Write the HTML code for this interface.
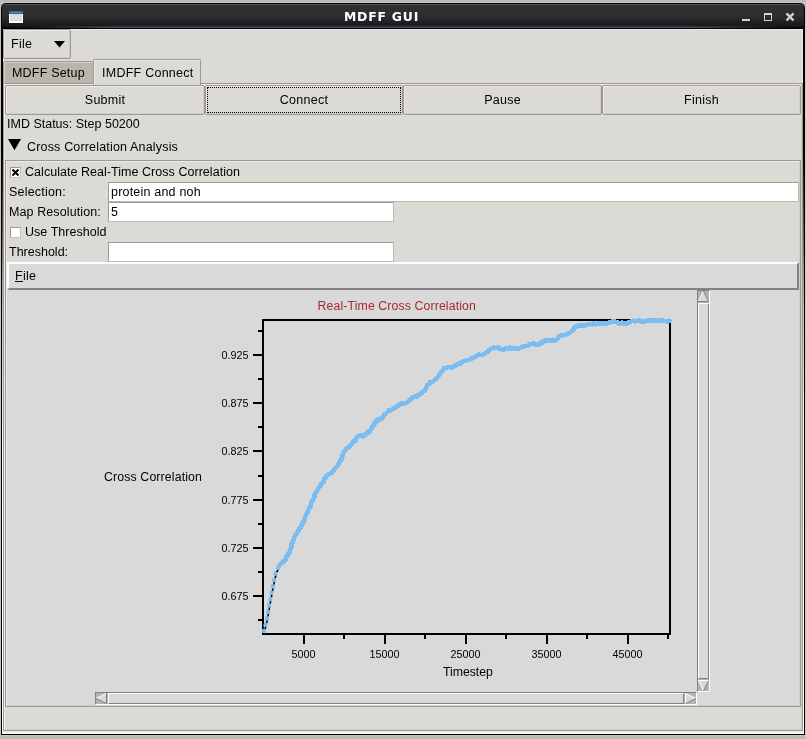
<!DOCTYPE html>
<html>
<head>
<meta charset="utf-8">
<title>MDFF GUI</title>
<style>
html,body{margin:0;padding:0;}
body{width:806px;height:739px;position:relative;overflow:hidden;background:#bebab8;
 font-family:"Liberation Sans",sans-serif;font-size:12.5px;letter-spacing:0.04px;color:#000;}
#root{position:absolute;left:0;top:0;width:806px;height:739px;will-change:transform;}
.a{position:absolute;}
.t{position:absolute;white-space:nowrap;line-height:14px;height:14px;}
.clam{position:absolute;box-sizing:border-box;border:1px solid #9e9a91;box-shadow:inset 1px 1px 0 #eeebe7,inset -1px -1px 0 #cfcdc8;}
.btn{border-radius:2px;background:#dcdad5;}
.btn span{position:absolute;left:0;right:0;top:7px;text-align:center;line-height:14px;letter-spacing:0.25px;}
.entry{position:absolute;box-sizing:border-box;border:1px solid;border-color:#9e9a91 #bdb9b0 #bdb9b0 #9e9a91;background:#fff;}
.entry span{position:absolute;left:2px;top:2px;line-height:14px;white-space:nowrap;}
.chk{position:absolute;box-sizing:border-box;width:11px;height:11px;border:1px solid;border-color:#9e9a91 #c5c2ba #c5c2ba #9e9a91;background:#fff;}
.tk{font-family:"Liberation Sans",sans-serif;font-size:10.8px;fill:#000;letter-spacing:0;}
.lb{font-family:"Liberation Sans",sans-serif;font-size:12.3px;fill:#000;letter-spacing:0.08px;}
</style>
</head>
<body>
<div id="root">
<!-- desktop edge highlights -->
<div class="a" style="left:0;top:2px;width:806px;height:1px;background:#cac7c5;"></div>
<div class="a" style="left:0;top:735px;width:806px;height:1px;background:#c8c4c3;"></div>
<div class="a" style="left:805px;top:6px;width:1px;height:730px;background:#cdc9c8;"></div>
<div class="a" style="left:0;top:6px;width:1px;height:730px;background:#c8c4c3;"></div>
<!-- window frame -->
<div class="a" style="left:1px;top:3px;width:804px;height:732px;background:#000;border-radius:5px 5px 0 0;"></div>
<div class="a" style="left:2px;top:4px;width:802px;height:24px;border-radius:4px 4px 0 0;
 background:linear-gradient(#50504e 0,#50504e 1px,#343434 1px,#343434 2px,#303030 2px,#2f2f2f 11px,#262626 16px,#1e1e1e 19px,#1b1b1b 21px,#181818 22px,#101010 23px,#000 24px);"></div>
<div class="a" style="left:2px;top:25px;width:802px;height:3px;
 background:linear-gradient(#1b1d22 0,#1b1d22 1px,#2a3648 1px,#2a3648 2px,#3d4d66 2px,#3d4d66 3px);
 -webkit-mask-image:linear-gradient(90deg,rgba(0,0,0,0) 0,rgba(0,0,0,0.15) 30px,#000 110px,#000 690px,rgba(0,0,0,0.4) 750px,rgba(0,0,0,0) 790px);
 mask-image:linear-gradient(90deg,rgba(0,0,0,0) 0,rgba(0,0,0,0.15) 30px,#000 110px,#000 690px,rgba(0,0,0,0.4) 750px,rgba(0,0,0,0) 790px);"></div>
<!-- window icon -->
<div class="a" style="left:9px;top:11px;width:14px;height:12px;background:#fff;"></div>
<div class="a" style="left:9px;top:11px;width:14px;height:3px;background:#3465a4;"></div>
<div class="a" style="left:10px;top:12px;width:12px;height:1px;background:#5a86c0;"></div>
<div class="a" style="left:10px;top:14px;width:12px;height:7px;background:#dddbd7;"></div>
<div class="a" style="left:0px;width:763px;top:8.7px;text-align:center;color:#fff;font-family:'DejaVu Sans',sans-serif;font-weight:bold;font-size:12.4px;line-height:16px;letter-spacing:0.8px;">MDFF GUI</div>
<svg class="a" style="left:736px;top:8px" width="60" height="18" viewBox="0 0 60 18">
 <rect x="6" y="11" width="8" height="2" fill="#d3d3d3"/>
 <rect x="28.5" y="5.5" width="7" height="7" fill="none" stroke="#d3d3d3" stroke-width="1"/>
 <rect x="28" y="5" width="8" height="2" fill="#d3d3d3"/>
 <path d="M50.5 5.3 L57.5 12.5 M57.5 5.3 L50.5 12.5" stroke="#d3d3d3" stroke-width="2.4" fill="none"/>
</svg>
<!-- client -->
<div class="a" style="left:2px;top:29px;width:802px;height:705px;background:#dcdad5;"></div>
<div class="a" style="left:3px;top:29px;width:800px;height:1px;background:#ebe9e5;"></div>
<div class="a" style="left:2px;top:29px;width:1px;height:705px;background:linear-gradient(#000 0,#000 120px,#555 200px,#b0aeaa 260px,#e8e8e6 370px,#fff 500px);"></div>
<div class="a" style="left:803px;top:29px;width:1px;height:705px;background:linear-gradient(#000 0,#000 120px,#555 200px,#b0aeaa 260px,#eeedeb 370px,#fff 500px);"></div>
<div class="a" style="left:2px;top:731px;width:802px;height:1px;background:#eeece9;"></div>
<div class="a" style="left:2px;top:732px;width:802px;height:1px;background:#f2f1ef;"></div>
<div class="a" style="left:2px;top:733px;width:802px;height:1px;background:#fff;"></div>
<div class="a" style="left:3px;top:29px;width:1px;height:54px;background:#ebe9e5;"></div>
<div class="a" style="left:802px;top:29px;width:1px;height:54px;background:#ebe9e5;"></div>
<!-- File menubutton -->
<div class="clam btn" style="left:3px;top:29px;width:68px;height:30px;"></div>
<div class="t" style="left:11px;top:37px;letter-spacing:0.25px;">File</div>
<svg class="a" style="left:54px;top:41px" width="12" height="7"><path d="M0 0 L11 0 L5.5 6.5 Z" fill="#000"/></svg>
<!-- notebook -->
<div class="clam" style="left:3px;top:83px;width:800px;height:648px;"></div>
<div class="a" style="left:3px;top:61px;width:92px;height:22px;box-sizing:border-box;border:1px solid #9e9a91;border-bottom:none;border-radius:2px 2px 0 0;background:#bab5ab;box-shadow:inset 1px 1px 0 #cfcdc8;"></div>
<div class="t" style="left:12px;top:66px;letter-spacing:0.2px;">MDFF Setup</div>
<div class="a" style="left:93px;top:59px;width:108px;height:26px;box-sizing:border-box;border:1px solid #9e9a91;border-bottom:none;border-radius:2px 2px 0 0;background:#dcdad5;box-shadow:inset 1px 1px 0 #eeebe7;"></div>
<div class="t" style="left:102px;top:66px;letter-spacing:0.25px;">IMDFF Connect</div>
<!-- buttons -->
<div class="clam btn" style="left:5px;top:85px;width:200px;height:30px;"><span>Submit</span></div>
<div class="clam btn" style="left:205px;top:85px;width:198px;height:30px;"><span>Connect</span>
 <div class="a" style="left:1px;top:1px;right:1px;bottom:1px;border:1px dotted #000;"></div></div>
<div class="clam btn" style="left:403px;top:85px;width:199px;height:30px;"><span>Pause</span></div>
<div class="clam btn" style="left:602px;top:85px;width:199px;height:30px;"><span>Finish</span></div>
<div class="t" style="left:7px;top:117px;letter-spacing:0;">IMD Status: Step 50200</div>
<svg class="a" style="left:8px;top:138px" width="14" height="13"><path d="M0 1 L13 1 L6.5 12.3 Z" fill="#000"/></svg>
<div class="t" style="left:27px;top:140px;letter-spacing:0.17px;">Cross Correlation Analysis</div>
<!-- labelframe -->
<div class="clam" style="left:5px;top:160px;width:796px;height:547px;"></div>
<div class="chk" style="left:10px;top:167px;"></div>
<svg class="a" style="left:12px;top:169px" width="7" height="7"><path d="M0.5 0.5 L6.5 6.5 M6.5 0.5 L0.5 6.5" stroke="#000" stroke-width="2" fill="none"/></svg>
<div class="t" style="left:25px;top:165px;">Calculate Real-Time Cross Correlation</div>
<div class="t" style="left:9px;top:185px;letter-spacing:0.2px;">Selection:</div>
<div class="entry" style="left:108px;top:182px;width:691px;height:20px;"><span style="letter-spacing:0.2px;">protein and noh</span></div>
<div class="t" style="left:9px;top:205px;letter-spacing:0.1px;">Map Resolution:</div>
<div class="entry" style="left:108px;top:202px;width:286px;height:20px;"><span>5</span></div>
<div class="chk" style="left:10px;top:227px;"></div>
<div class="t" style="left:25px;top:225px;">Use Threshold</div>
<div class="t" style="left:9px;top:245px;letter-spacing:0;">Threshold:</div>
<div class="entry" style="left:108px;top:242px;width:286px;height:20px;"></div>
<!-- canvas area -->
<div class="a" style="left:7px;top:262px;width:792px;height:443px;background:#d9d9d9;"></div>
<!-- menubar -->
<div class="a" style="left:7px;top:262px;width:792px;height:28px;box-sizing:border-box;background:#d9d9d9;border-style:solid;border-width:2px;border-color:#fff #828282 #828282 #fff;"></div>
<div class="t" style="left:15px;top:269px;letter-spacing:0.3px;">File</div>
<div class="a" style="left:15px;top:281px;width:8px;height:1px;background:#000;"></div>
<!-- plot -->
<svg class="a" style="left:0;top:0" width="806" height="739" viewBox="0 0 806 739">
 <rect x="263" y="320" width="407" height="314" fill="none" stroke="#000" stroke-width="2"/>
 <g fill="#000">
 <rect x="253" y="354" width="9" height="2"/><text x="248.6" y="358.6" text-anchor="end" class="tk">0.925</text>
<rect x="253" y="402" width="9" height="2"/><text x="248.6" y="406.6" text-anchor="end" class="tk">0.875</text>
<rect x="253" y="450" width="9" height="2"/><text x="248.6" y="454.6" text-anchor="end" class="tk">0.825</text>
<rect x="253" y="499" width="9" height="2"/><text x="248.6" y="503.6" text-anchor="end" class="tk">0.775</text>
<rect x="253" y="547" width="9" height="2"/><text x="248.6" y="551.6" text-anchor="end" class="tk">0.725</text>
<rect x="253" y="595" width="9" height="2"/><text x="248.6" y="599.6" text-anchor="end" class="tk">0.675</text>
<rect x="258" y="330" width="4" height="2"/>
<rect x="258" y="378" width="4" height="2"/>
<rect x="258" y="426" width="4" height="2"/>
<rect x="258" y="475" width="4" height="2"/>
<rect x="258" y="523" width="4" height="2"/>
<rect x="258" y="571" width="4" height="2"/>
<rect x="258" y="619" width="4" height="2"/>
<rect x="303" y="635" width="2" height="9"/><text x="303.5" y="658" text-anchor="middle" class="tk">5000</text>
<rect x="384" y="635" width="2" height="9"/><text x="384.5" y="658" text-anchor="middle" class="tk">15000</text>
<rect x="465" y="635" width="2" height="9"/><text x="465.5" y="658" text-anchor="middle" class="tk">25000</text>
<rect x="546" y="635" width="2" height="9"/><text x="546.5" y="658" text-anchor="middle" class="tk">35000</text>
<rect x="627" y="635" width="2" height="9"/><text x="627.5" y="658" text-anchor="middle" class="tk">45000</text>
<rect x="343" y="635" width="2" height="4"/>
<rect x="424" y="635" width="2" height="4"/>
<rect x="505" y="635" width="2" height="4"/>
<rect x="586" y="635" width="2" height="4"/>
<rect x="667" y="635" width="2" height="4"/>

 </g>
 <text x="317.6" y="309.8" class="lb" style="fill:#a52a2a;letter-spacing:0.11px">Real-Time Cross Correlation</text>
 <text x="104" y="480.6" class="lb" style="letter-spacing:0.14px">Cross Correlation</text>
 <text x="443" y="675.8" class="lb" style="letter-spacing:-0.05px">Timestep</text>
 <polyline points="263.5,633.0 266.9,618.6 269.1,605.6 272.3,588.3 275.6,573.1 278.8,566.6" fill="none" stroke="#000" stroke-width="1.6" transform="translate(0.7,0)"/>
 <polyline points="263.5,633.0 266.9,618.6 269.1,605.6 272.3,588.3 275.6,573.1 278.8,566.6" fill="none" stroke="#7bbdf0" stroke-width="3.8" stroke-dasharray="4.2 2.3"/>
 <polyline points="278.8,566.6 279.9,564.7 281.5,563.2 282.7,562.5 283.6,561.4 285.3,560.1 285.6,558.5 286.4,556.5 287.4,556.4 287.9,553.9 289.1,553.7 289.7,551.5 290.3,549.7 291.2,547.4 291.6,546.2 291.5,544.3 292.2,543.9 292.6,541.9 293.6,539.9 294.0,538.5 294.9,536.2 295.3,534.9 296.7,533.8 297.3,532.6 298.3,530.9 299.2,528.9 300.4,528.0 300.8,526.2 301.9,525.1 303.0,522.4 303.7,521.2 304.8,519.0 304.9,518.5 305.3,516.5 305.8,515.3 307.1,513.5 307.8,511.5 308.1,510.3 309.0,508.9 309.6,507.0 310.6,506.3 310.9,504.1 311.3,502.6 312.4,500.6 313.2,500.0 314.1,497.3 314.4,496.6 314.8,494.7 315.7,492.7 316.7,491.9 317.2,490.8 318.2,488.3 319.5,487.2 320.3,486.3 321.0,484.0 322.3,483.3 323.5,481.7 323.9,479.3 324.9,478.6 326.0,476.4 328.0,474.7 329.0,473.8 330.6,473.1 332.5,472.1 333.7,470.2 334.2,469.1 335.6,467.9 337.2,466.6 337.9,465.1 339.0,463.4 339.9,461.2 340.8,461.0 341.5,459.6 341.8,457.4 342.3,456.4 342.9,454.0 343.8,452.7 344.6,451.0 345.5,450.4 346.4,448.5 347.7,447.6 349.0,447.2 350.8,444.6 352.0,443.9 352.9,442.4 354.0,440.7 355.6,441.0 356.3,438.8 357.0,436.9 358.5,436.3 360.0,435.6 362.0,435.2 362.9,436.4 365.0,435.3 366.3,433.4 367.6,431.8 368.9,432.3 370.4,430.5 371.4,428.8 372.1,427.0 372.9,426.3 374.2,424.8 374.9,422.2 376.3,422.1 376.9,419.7 379.0,419.7 380.8,418.9 382.3,417.9 383.1,416.7 384.3,414.6 385.1,413.8 386.4,413.2 388.1,411.6 388.8,410.4 390.8,410.7 392.5,409.1 393.4,408.3 395.3,408.2 396.5,406.2 398.3,406.1 399.6,403.9 401.5,403.6 403.0,403.9 404.1,403.4 406.1,402.8 407.8,402.2 408.9,400.6 409.7,400.1 411.1,399.0 412.6,397.4 414.6,396.7 415.8,397.1 417.7,395.2 419.1,395.2 420.1,393.3 422.1,393.2 422.7,391.9 424.7,390.3 425.6,388.7 426.5,387.2 427.4,384.6 429.2,384.1 429.9,382.2 431.5,382.2 433.1,381.3 435.1,379.3 436.4,379.0 437.1,377.3 438.1,376.4 439.0,374.8 439.9,374.3 441.0,372.1 442.2,371.6 443.0,370.2 444.0,368.1 445.9,368.0 447.8,366.9 449.6,367.1 451.5,367.5 452.6,367.2 454.2,365.9 456.3,365.2 457.4,364.3 459.1,363.5 460.7,363.4 461.8,362.3 463.5,361.1 465.5,360.9 466.8,360.2 468.9,360.0 471.2,358.7 472.8,358.1 474.4,357.2 475.8,356.6 477.2,355.5 478.7,354.5 480.7,355.0 482.9,354.6 484.7,353.6 486.6,352.1 487.7,352.2 489.4,349.7 490.3,349.2 492.1,348.2 493.7,347.5 495.7,348.1 498.1,347.6 500.6,349.2 502.5,349.4 504.1,349.3 506.4,347.9 508.5,348.9 510.0,347.6 511.5,348.6 513.5,347.9 515.8,348.7 516.8,348.2 518.9,348.5 520.8,347.6 522.4,347.0 524.7,345.9 526.4,346.2 528.3,345.3 529.7,344.4 532.1,344.0 533.8,343.2 535.4,344.4 538.1,344.6 539.8,344.1 540.9,342.7 542.3,342.6 544.2,341.1 546.2,340.1 548.7,340.5 550.5,341.1 552.7,339.8 553.9,340.8 556.1,339.9 557.7,338.9 558.7,336.3 560.6,335.7 562.5,335.0 563.8,335.3 566.1,334.5 567.3,334.0 569.5,332.8 570.4,332.4 572.0,330.3 573.3,330.3 574.3,327.7 575.8,326.8 577.0,326.2 578.5,325.4 580.3,325.4 582.4,325.4 584.4,325.6 586.5,324.9 588.2,324.4 589.9,323.8 591.9,324.4 593.5,323.4 595.7,324.3 597.0,324.0 599.4,323.2 600.8,323.8 602.8,323.3 604.2,323.7 605.8,322.8 607.8,323.3 609.2,322.7 611.2,322.0 612.7,321.4 614.6,321.7 616.3,321.9 618.7,323.2 620.1,323.6 622.0,322.6 623.7,323.8 626.2,323.5 627.6,323.2 628.9,322.1 630.4,321.9 631.8,321.3 633.6,320.8 635.4,321.4 638.0,320.5 639.5,320.2 641.5,321.8 644.0,321.7 645.8,320.9 647.6,320.5 650.0,320.2 651.8,320.4 653.4,320.7 655.1,320.5 657.4,321.1 658.7,320.9 660.4,320.2 662.3,320.5 664.3,321.0 666.1,321.2 667.8,321.5 669.3,320.8" fill="none" stroke="#7bbdf0" stroke-width="4.6" stroke-linejoin="round" stroke-linecap="round" shape-rendering="crispEdges"/>
</svg>
<!-- vertical scrollbar -->
<div class="a" style="left:697px;top:290px;width:13px;height:402px;box-sizing:border-box;background:#b3b3b3;border-style:solid;border-width:1px;border-color:#828282 #fff #fff #828282;"></div>
<div class="a" style="left:698px;top:303px;width:11px;height:376px;box-sizing:border-box;background:#d9d9d9;border-style:solid;border-width:1px;border-color:#fff #828282 #828282 #fff;"></div>
<svg class="a" style="left:698px;top:291px" width="11" height="11"><path d="M5.5 0 L11 11 L0 11 Z" fill="#d9d9d9"/><path d="M5.5 0 L0 11" stroke="#fff" stroke-width="1" fill="none"/><path d="M5.5 0 L10.5 10.5 L0 10.5" stroke="#828282" stroke-width="1" fill="none"/></svg>
<svg class="a" style="left:698px;top:680px" width="11" height="11"><path d="M0 0 L11 0 L5.5 11 Z" fill="#d9d9d9"/><path d="M11 0.5 L0.5 0.5 L5.5 11" stroke="#fff" stroke-width="1" fill="none"/><path d="M5.5 11 L10.5 0.5" stroke="#828282" stroke-width="1" fill="none"/></svg>
<!-- horizontal scrollbar -->
<div class="a" style="left:95px;top:692px;width:602px;height:13px;box-sizing:border-box;background:#b3b3b3;border-style:solid;border-width:1px;border-color:#828282 #fff #fff #828282;"></div>
<div class="a" style="left:108px;top:693px;width:576px;height:11px;box-sizing:border-box;background:#d9d9d9;border-style:solid;border-width:1px;border-color:#fff #828282 #828282 #fff;"></div>
<svg class="a" style="left:96px;top:693px" width="11" height="11"><path d="M0 5.5 L11 0 L11 11 Z" fill="#d9d9d9"/><path d="M0 5.5 L11 0" stroke="#fff" stroke-width="1" fill="none"/><path d="M0 5.5 L10.5 10.5 L10.5 0" stroke="#828282" stroke-width="1" fill="none"/></svg>
<svg class="a" style="left:685px;top:693px" width="11" height="11"><path d="M0 0 L11 5.5 L0 11 Z" fill="#d9d9d9"/><path d="M0.5 11 L0.5 0.5 L11 5.5" stroke="#fff" stroke-width="1" fill="none"/><path d="M11 5.5 L0.5 10.5" stroke="#828282" stroke-width="1" fill="none"/></svg>
</div>
</body>
</html>
